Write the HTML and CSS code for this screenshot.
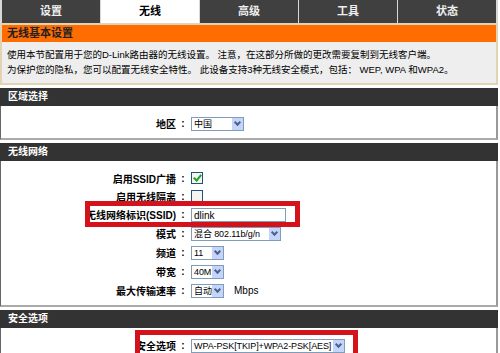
FILE: index.html
```html
<!DOCTYPE html>
<html lang="zh-CN">
<head>
<meta charset="UTF-8">
<title>无线基本设置</title>
<link rel="stylesheet" href="styles.css">
</head>
<body>
<div class="page">
    <div class="tabs">
        <div class="tab">设置</div>
        <div class="tab active">无线</div>
        <div class="tab">高级</div>
        <div class="tab">工具</div>
        <div class="tab">状态</div>
    </div>

    <div class="intro">
        <div class="intro-title">无线基本设置</div>
        <div class="intro-text">
            <p>使用本节配置用于您的D-Link路由器的无线设置。 注意，在这部分所做的更改需要复制到无线客户端。</p>
            <p>为保护您的隐私，您可以配置无线安全特性。 此设备支持3种无线安全模式，包括： WEP, WPA 和WPA2。</p>
        </div>
    </div>

    <div class="section">
        <div class="sec-head">区域选择</div>
        <div class="sec-body region">
            <div class="row">
                <span class="label">地区</span><span class="colon">:</span>
                <span class="select w53"><span class="val">中国</span><span class="arrow"></span></span>
            </div>
        </div>
    </div>

    <div class="section">
        <div class="sec-head">无线网络</div>
        <div class="sec-body wlan">
            <div class="row short">
                <span class="label">启用SSID广播</span><span class="colon">:</span>
                <span class="check on"></span>
            </div>
            <div class="row short">
                <span class="label">启用无线隔离</span><span class="colon">:</span>
                <span class="check"></span>
            </div>
            <div class="row">
                <span class="label">无线网络标识(SSID)</span><span class="colon">:</span>
                <span class="input">dlink</span>
                <div class="mark mark-ssid"></div>
            </div>
            <div class="row">
                <span class="label">模式</span><span class="colon">:</span>
                <span class="select w90"><span class="val">混合 802.11b/g/n</span><span class="arrow"></span></span>
            </div>
            <div class="row">
                <span class="label">频道</span><span class="colon">:</span>
                <span class="select w32"><span class="val">11</span><span class="arrow"></span></span>
            </div>
            <div class="row">
                <span class="label">带宽</span><span class="colon">:</span>
                <span class="select w32"><span class="val">40M</span><span class="arrow"></span></span>
            </div>
            <div class="row">
                <span class="label">最大传输速率</span><span class="colon">:</span>
                <span class="select w32"><span class="val">自动</span><span class="arrow"></span></span>
                <span class="unit">Mbps</span>
            </div>
        </div>
    </div>

    <div class="section">
        <div class="sec-head">安全选项</div>
        <div class="sec-body security">
            <div class="row">
                <span class="label">安全选项</span><span class="colon">:</span>
                <span class="select w154"><span class="val">WPA-PSK[TKIP]+WPA2-PSK[AES]</span><span class="arrow"></span></span>
            </div>
            <div class="mark mark-sec"></div>
        </div>
    </div>
</div>
</body>
</html>
```

FILE: styles.css
```css
body {
    margin: 0;
    background-color: #fff;
    font-family: "Liberation Sans", "Noto Sans CJK SC", sans-serif;
    color: #000;
    overflow: hidden;
}
.page {
    width: 498px;
}
.tabs {
    display: flex;
    gap: 1px;
    padding-left: 2px;
    background-color: #d8d8d8;
    height: 23px;
}
.tab {
    width: 98px;
    background-color: #404040;
    color: #eee;
    font-size: 11px;
    font-weight: bold;
    text-align: center;
    line-height: 23px;
}
.tab.active {
    background-color: #fff;
    color: #000;
}
.intro {
    border: 2px solid #e2d3b2;
}
.intro-title {
    background-color: #ff6c00;
    height: 17px;
    line-height: 17px;
    padding-left: 5px;
    font-size: 11px;
    font-weight: bold;
    color: #222;
}
.intro-text {
    background-color: #eeeeee;
    padding: 5px 5px 6px;
    font-size: 9.5px;
}
.intro-text p {
    margin: 0;
    line-height: 15px;
}
.section {
    margin-top: 3px;
}
.sec-head {
    background-color: #333;
    color: #fff;
    font-size: 10px;
    font-weight: bold;
    height: 18px;
    line-height: 18px;
    padding-left: 8px;
}
.sec-body {
    position: relative;
    background-color: #fff;
    border-left: 1px solid #666;
    border-right: 2px solid #999;
    border-bottom: 2px solid #aaa;
}
.region {
    padding: 8px 0 5px;
}
.wlan {
    padding: 8px 0 5px;
}
.security {
    padding: 8px 0 20px;
}
.row {
    position: relative;
    display: flex;
    align-items: center;
    height: 19px;
}
.row.short {
    height: 18px;
}
.label {
    width: 175px;
    text-align: right;
    font-size: 10px;
    font-weight: bold;
}
.colon {
    width: 14px;
    text-align: center;
    font-size: 10px;
    font-weight: bold;
}
.select {
    display: flex;
    align-items: center;
    height: 14px;
    border: 1px solid #7f9db9;
    background-color: #fff;
    box-sizing: border-box;
    font-size: 9px;
    margin-left: 1px;
}
.select .val {
    flex: 1;
    padding-left: 2px;
    white-space: nowrap;
    letter-spacing: -0.1px;
}
.select .arrow {
    flex: none;
    width: 11px;
    height: 12px;
    background-color: #c4d4fb;
    position: relative;
}
.select .arrow::after {
    content: "";
    position: absolute;
    left: 3px;
    top: 2px;
    width: 3px;
    height: 3px;
    border-right: 2px solid #4d6185;
    border-bottom: 2px solid #4d6185;
    transform: rotate(45deg);
}
.w32 { width: 33px; }
.w53 { width: 53px; }
.w90 { width: 90px; }
.w154 { width: 154px; }
.check {
    width: 10px;
    height: 10px;
    border: 1px solid #1c5180;
    margin-left: 1px;
    position: relative;
    background-color: #f4f4f0;
}
.check.on::after {
    content: "";
    position: absolute;
    left: 3px;
    top: 0px;
    width: 3px;
    height: 6px;
    border-right: 2px solid #21a121;
    border-bottom: 2px solid #21a121;
    transform: rotate(40deg);
}
.input {
    width: 95px;
    height: 14px;
    line-height: 14px;
    border: 1px solid #7f9db9;
    box-sizing: border-box;
    font-size: 10px;
    padding-left: 2px;
    margin-left: 1px;
}
.unit {
    font-size: 10px;
    margin-left: 10px;
}
.mark {
    position: absolute;
    border: 5px solid #d3121c;
    box-sizing: border-box;
}
.mark-ssid {
    left: 84px;
    top: -4px;
    width: 215px;
    height: 26px;
}
.mark-sec {
    left: 134px;
    top: 2px;
    width: 223px;
    height: 40px;
}
```
